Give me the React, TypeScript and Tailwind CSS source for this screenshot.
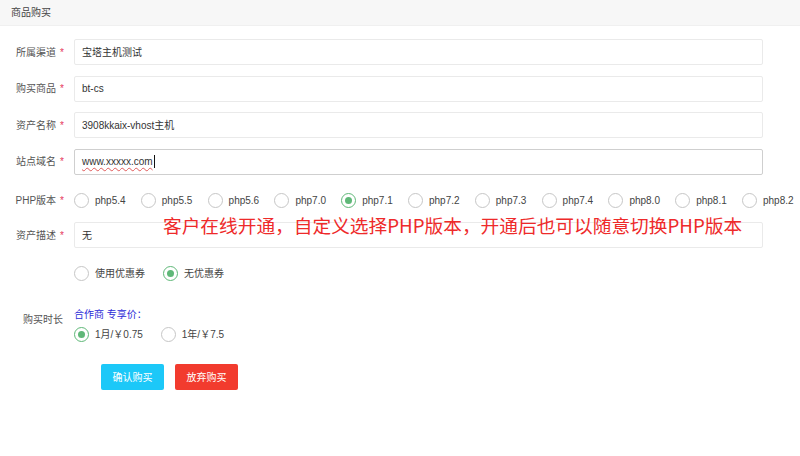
import React from "react";

const FONT = { fontFamily: '"Liberation Sans", "Noto Sans CJK SC", sans-serif' };

function Radio({ checked }: { checked?: boolean }) {
  return (
    <span
      className={
        "flex h-[15px] w-[15px] shrink-0 items-center justify-center rounded-full border bg-white " +
        (checked ? "border-[#5fb878]" : "border-[#c6c6c6]")
      }
    >
      {checked && <span className="h-[7px] w-[7px] rounded-full bg-[#5fb878]" />}
    </span>
  );
}

function Label({ text }: { text: string }) {
  return (
    <div className="flex w-[74px] shrink-0 items-center justify-end pr-[10px] text-[10px] text-[#555]">
      <span>{text}</span>
      <span className="ml-[4px] text-[#e5365c]">*</span>
    </div>
  );
}

function InputRow({ label, value, focused, children }: { label: string; value?: string; focused?: boolean; children?: React.ReactNode }) {
  return (
    <div className="flex h-[26px] items-center">
      <Label text={label} />
      <div
        className={
          "flex h-[26px] w-[689px] items-center rounded-[2px] border bg-white pl-[7px] text-[10px] text-[#333] " +
          (focused ? "border-[#cfcfcf]" : "border-[#eaeaea]")
        }
      >
        {children ?? value}
      </div>
    </div>
  );
}

const phps = ["php5.4", "php5.5", "php5.6", "php7.0", "php7.1", "php7.2", "php7.3", "php7.4", "php8.0", "php8.1", "php8.2"];

export default function App() {
  return (
    <div className="relative h-[456px] w-[800px] overflow-hidden bg-white" style={FONT}>
      <div className="flex h-[26px] items-center border-b border-[#f0f0f0] bg-[#f7f7f7] pl-[11px] text-[10px] text-[#444]">
        商品购买
      </div>

      <div className="flex flex-col pt-[13px]">
        <div className="flex flex-col gap-[10.5px]">
          <InputRow label="所属渠道" value="宝塔主机测试" />
          <InputRow label="购买商品" value="bt-cs" />
          <InputRow label="资产名称" value="3908kkaix-vhost主机" />
          <InputRow label="站点域名" focused>
            <span className="underline decoration-wavy decoration-[#e05a5a] decoration-[1px] underline-offset-[2px]">www.xxxxx.com</span>
            <span className="ml-[1px] h-[13px] w-[1px] bg-[#111]" />
          </InputRow>
        </div>

        <div className="mt-[12.5px] flex h-[26px] items-center">
          <Label text="PHP版本" />
          <div className="flex items-center">
            {phps.map((p) => (
              <div key={p} className="flex w-[66.8px] items-center gap-[6px] text-[10px] text-[#444]">
                <Radio checked={p === "php7.1"} />
                <span>{p}</span>
              </div>
            ))}
          </div>
        </div>

        <div className="mt-[9px]">
          <InputRow label="资产描述" value="无" />
        </div>

        <div className="mt-[12px] flex h-[26px] items-center pl-[74px] text-[10px] text-[#444]">
          <div className="flex items-center gap-[6px]">
            <Radio />
            <span>使用优惠券</span>
          </div>
          <div className="ml-[18px] flex items-center gap-[6px]">
            <Radio checked />
            <span>无优惠券</span>
          </div>
        </div>

        <div className="mt-[22px] flex">
          <div className="flex w-[74px] shrink-0 items-start justify-end pr-[11px] pt-[5px] text-[10px] leading-[14px] text-[#555]">
            购买时长
          </div>
          <div className="flex flex-col">
            <div className="text-[10px] leading-[14px] text-[#2b2bd8]">合作商 专享价：</div>
            <div className="mt-[5px] flex items-center text-[10px] text-[#444]">
              <div className="flex items-center gap-[6px]">
                <Radio checked />
                <span>1月/￥0.75</span>
              </div>
              <div className="ml-[18px] flex items-center gap-[6px]">
                <Radio />
                <span>1年/￥7.5</span>
              </div>
            </div>
          </div>
        </div>

        <div className="mt-[22px] flex gap-[11px] pl-[101px]">
          <div className="flex h-[26px] w-[63px] items-center justify-center rounded-[2px] bg-[#1cc8f8] text-[10px] text-white">
            确认购买
          </div>
          <div className="flex h-[26px] w-[63px] items-center justify-center rounded-[2px] bg-[#f23b2e] text-[10px] text-white">
            放弃购买
          </div>
        </div>
      </div>

      <div
        className="absolute left-[163px] top-[212px] whitespace-nowrap text-[18.7px] leading-[26px] text-[#ee2a2a]"
        style={{ fontFamily: '"Noto Sans CJK SC", sans-serif' }}
      >
        客户在线开通，自定义选择PHP版本，开通后也可以随意切换PHP版本
      </div>
    </div>
  );
}
